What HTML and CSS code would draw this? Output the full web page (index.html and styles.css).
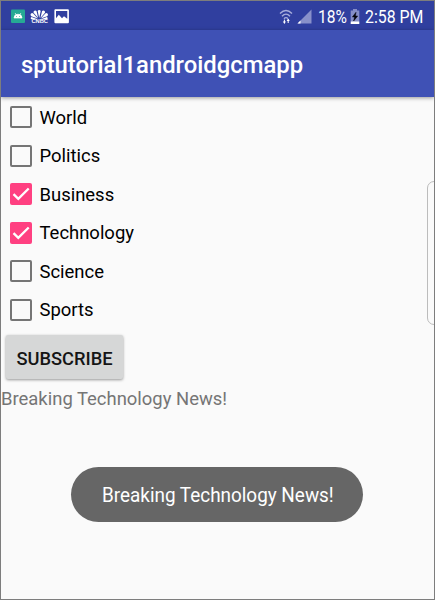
FILE: index.html
```
<!DOCTYPE html>
<html lang="en">
<head>
<meta charset="utf-8">
<title>sptutorial1androidgcmapp</title>
<link rel="stylesheet" href="styles.css">
</head>
<body>
<div class="screen">
  <div class="status">
    <svg class="notices" width="62" height="17" viewBox="0 0 62 17">
      <rect x="0" y="1.5" width="14" height="13.5" rx="1" fill="#26a994"/>
      <path d="M3 10a4 3.8 0 0 1 8 0zM4 5l1.5 2M10 5l-1.5 2" fill="#fff" stroke="#fff" stroke-width=".7"/>
      <path d="M5 8.5h.8M8.2 8.5h.8" stroke="#26a994" stroke-width=".8"/>
      <g fill="#fff">
        <path d="M28.2 10L26.7 3a1.7 1.7 0 0 1 3 0z"/>
        <path d="M27.2 10L22.6 4.7a1.7 1.7 0 0 1 2.9-1.6z"/>
        <path d="M29.4 10L34 4.7a1.7 1.7 0 0 0-2.9-1.6z"/>
        <path d="M26.7 10.5L20.3 8.2a1.6 1.6 0 0 1 1.9-2.8z"/>
        <path d="M29.8 10.5l6.4-2.3a1.6 1.6 0 0 0-1.9-2.8z"/>
        <path d="M26.4 11.3h-6a1.3 1.3 0 0 1 .2-2.4zM30 11.3h6a1.3 1.3 0 0 0-.2-2.4z"/>
      </g>
      <text class="cnbc" x="20.4" y="14.9" textLength="16.6" lengthAdjust="spacingAndGlyphs">CNBC</text>
      <path fill="#fff" fill-rule="evenodd" d="M44.4 1.3h12.5a1 1 0 0 1 1 1v12a1 1 0 0 1-1 1H44.4a1 1 0 0 1-1-1v-12a1 1 0 0 1 1-1zM45 3v7.3l2.8-3.5 3.2 3.5 2-2 3.3 2.5V3z"/>
    </svg>
    <div class="readings">
      <svg width="34" height="18" viewBox="0 0 34 18">
        <g fill="none" stroke="#a8aedb" stroke-width="1.4">
          <path d="M1 5.6Q7-.4 13 5.6M3 8.2Q7 4 11 8.2M5 10.7Q7 8.6 9 10.7"/>
        </g>
        <path d="M5.4 11.6v3.8M9.2 11.2v3.8" stroke="#fff" stroke-width="1"/>
        <path d="M3.8 13.6h3.2l-1.6 2.2zM7.6 13h3.2l-1.6-2.2z" fill="#fff"/>
        <path d="M32.5 1.5V15.5H18.5z" fill="#8890ca"/>
        <path d="M21.5 12.5v3h-3z" fill="#fff"/>
      </svg>
      <span class="reading percent"><span class="fit">18%</span></span>
      <svg class="battery" width="10" height="16" viewBox="0 0 10 16">
        <path d="M3 0h4v1.5h2.3V12H.7V1.5H3z" fill="#858dc7"/>
        <path d="M.7 12.3h8.6V15H.7z" fill="#fff"/>
        <path d="M6 3.3L2.4 8h2.2l-1 4L7.7 7H5.4z" fill="#05050c" stroke="#05050c" stroke-width=".5"/>
      </svg>
      <span class="reading clock"><span class="fit">2:58 PM</span></span>
    </div>
  </div>
  <header class="bar"><h1>sptutorial1androidgcmapp</h1></header>
  <main>
    <div class="options">
      <label class="option"><span class="box"></span><span>World</span></label>
      <label class="option"><span class="box"></span><span>Politics</span></label>
      <label class="option"><span class="box checked"><svg width="22" height="22" viewBox="0 0 22 22"><path d="M3.5 11.1l4.8 4.8L18.7 5.5"/></svg></span><span>Business</span></label>
      <label class="option"><span class="box checked"><svg width="22" height="22" viewBox="0 0 22 22"><path d="M3.5 11.1l4.8 4.8L18.7 5.5"/></svg></span><span>Technology</span></label>
      <label class="option"><span class="box"></span><span>Science</span></label>
      <label class="option"><span class="box"></span><span>Sports</span></label>
    </div>
    <button class="subscribe"><span>SUBSCRIBE</span></button>
    <p class="message">Breaking Technology News!</p>
  </main>
  <div class="edge-handle"></div>
  <div class="toast"><span class="fit">Breaking Technology News!</span></div>
</div>
</body>
</html>
```
FILE: styles.css
```
* { box-sizing: border-box; }
body { margin: 0; font-family: Roboto, "Liberation Sans", sans-serif; }
.screen {
  position: relative;
  width: 435px;
  height: 600px;
  overflow: hidden;
  border: 1px solid #7d7d7d;
  background: #fafafa;
}
.status {
  display: flex;
  justify-content: space-between;
  height: 29px;
  padding: 7px 11px 0 10px;
  background: #303f9f;
  color: #fff;
}
.cnbc { font: bold 4.8px "Liberation Sans", sans-serif; fill: #fff; }
.readings { display: flex; }
.readings > svg { flex: none; }
.battery { margin: 1px 5px 0 3px; }
.reading { font-size: 19px; line-height: 17px; white-space: nowrap; }
.percent { width: 29px; margin-left: 5px; }
.clock { width: 58px; }
.fit { display: inline-block; white-space: nowrap; transform-origin: left center; }
.percent .fit { transform: scaleX(.82); }
.clock .fit { transform: scaleX(.835); }
.bar {
  position: relative;
  display: flex;
  align-items: center;
  height: 67px;
  padding: 2px 0 0 20px;
  background: #3f51b5;
  box-shadow: 0 1px 4px rgba(0, 0, 0, .4);
}
h1 { margin: 0; color: #fff; font-size: 23.85px; font-weight: 500; line-height: 30px; white-space: nowrap; }
.options { display: flex; flex-direction: column; padding-top: 1px; }
.option {
  display: flex;
  align-items: center;
  gap: 8px;
  height: 38.5px;
  padding-left: 8.5px;
  color: #000;
  font-size: 18.45px;
}
.option span:last-child { padding-top: 1px; }
.box { width: 22px; height: 22px; border: 2px solid #757575; border-radius: 2px; }
.checked { border: 0; background: #ff4081; }
.checked svg { display: block; fill: none; stroke: #fff; stroke-width: 2.3; }
.subscribe {
  display: block;
  width: 117px;
  height: 44px;
  margin: 6px 0 0 5px;
  padding: 2px 0 0;
  border: 0;
  border-radius: 2px;
  background: #d6d7d7;
  box-shadow: 0 1px 3px rgba(0, 0, 0, .4);
  color: #151515;
  font: 500 18.3px Roboto, "Liberation Sans", sans-serif;
}
.message { margin: 9px 0 0; color: #757575; font-size: 18.45px; line-height: 22px; }
.edge-handle {
  position: absolute;
  top: 180px;
  right: -7px;
  width: 14px;
  height: 144px;
  border: 1px solid #bcbcbc;
  border-radius: 8px;
}
.toast {
  position: absolute;
  top: 466px;
  left: 70px;
  width: 292px;
  height: 55px;
  padding-left: 31px;
  border-radius: 28px;
  background: #666;
  color: #fff;
  font-size: 21px;
  line-height: 57px;
}
.toast .fit { transform: scaleX(.9); }
```
